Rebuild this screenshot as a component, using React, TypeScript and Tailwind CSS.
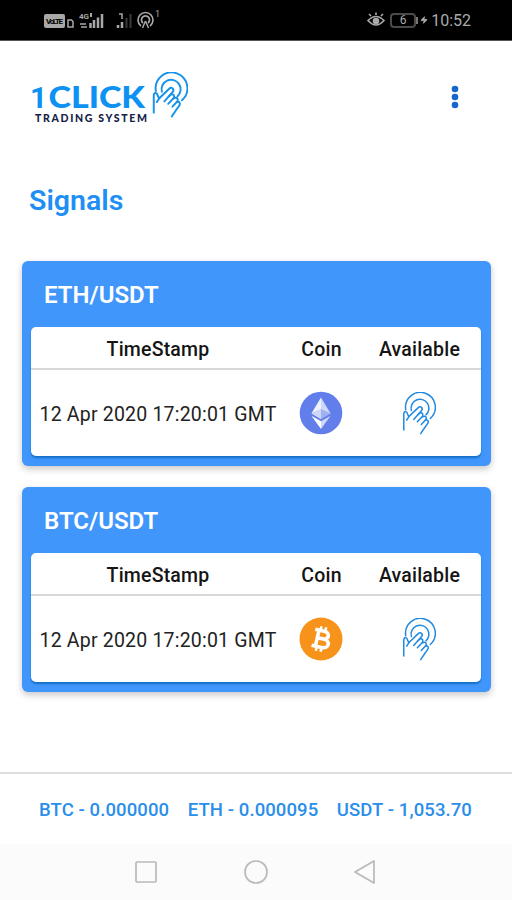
import { Zap } from "lucide-react";

type CoinName = "ETH" | "BTC";

const signals: { pair: string; coin: CoinName; time: string }[] = [
  { pair: "ETH/USDT", coin: "ETH", time: "12 Apr 2020 17:20:01 GMT" },
  { pair: "BTC/USDT", coin: "BTC", time: "12 Apr 2020 17:20:01 GMT" },
];

function TouchIcon({ className, strokeWidth = 4.5 }: { className?: string; strokeWidth?: number }) {
  return (
    <svg
      viewBox="42 32 102 130"
      className={className}
      fill="none"
      stroke="currentColor"
      strokeWidth={strokeWidth}
      strokeLinecap="round"
      strokeLinejoin="round"
    >
      <path d="M53 86A45 45 0 1 1 127 112" />
      <path d="M70 88A27 27 0 1 1 114 101" />
      <path d="M47 147V98q1-10 9-5l6 14 28-27q6-6 11-1 4 5-1 10L77 115" />
      <path d="M90 101l5-5q6-3 9 2 2 4-1 8L88 122" />
      <path d="M103 107q7-4 11 0 3 5-1 9l-13 14" />
      <path d="M113 117q6-2 8 3 1 4-3 9l-8 11-12 18" />
      <path d="M62 107l-6 10" />
    </svg>
  );
}

function Logo() {
  return (
    <div className="flex items-start">
      <svg width="121" height="54" className="block">
        <g fontFamily="Lato, sans-serif">
          <text x="-1" y="37" fontSize="30" fontFamily="Roboto, sans-serif" fontWeight="700" fill="#0d91f2">1</text>
          <text x="17.500" y="37" fontSize="30" fontWeight="900" fill="#0d91f2" textLength="96.500" lengthAdjust="spacingAndGlyphs">CLICK</text>
          <text x="4" y="50.500" fontSize="10.500" fontWeight="900" fill="#142347" textLength="112">TRADING SYSTEM</text>
        </g>
      </svg>
      <TouchIcon className="mt-px h-[46px] w-[36px] text-[#1593ea]" strokeWidth={5.5} />
    </div>
  );
}

function EthIcon() {
  return (
    <svg width="44" height="44" viewBox="0 0 44 44">
      <circle cx="22" cy="22" r="21.3" fill="#627eea" />
      <path d="M22 6.5L12.4 22.6 22 18.3z" fill="#fff" fillOpacity=".9" />
      <path d="M22 6.5l9.6 16.1L22 18.3z" fill="#fff" fillOpacity=".7" />
      <path d="M12.4 22.6L22 18.3v10z" fill="#fff" fillOpacity=".7" />
      <path d="M31.6 22.6L22 18.3v10z" fill="#fff" fillOpacity=".4" />
      <path d="M12.4 24.7L22 30.2v7.8z" fill="#fff" />
      <path d="M31.6 24.7L22 30.2v7.8z" fill="#fff" fillOpacity=".7" />
    </svg>
  );
}

function BtcIcon() {
  return (
    <svg width="44" height="44" viewBox="0 0 44 44">
      <circle cx="22" cy="22" r="21.5" fill="#f7931a" />
      <g transform="translate(22 22) rotate(13) scale(.97)" fill="none" stroke="#fff">
        <path d="M-8-8.5h9.500c7 0 7 8 0 8h-5.500h6.500c8 0 8 9 0 9H-8M-4-8.500v17" strokeWidth="3.700" />
        <path d="M-2.500-13v5M2.500-13v5M-2.500 8v5M2.500 8v5" strokeWidth="2.600" />
      </g>
    </svg>
  );
}

function StatusBar() {
  return (
    <div className="flex h-[41px] items-center border-b border-[#555] bg-black pr-[41px] pl-[43px] text-[#aaa]">
      <svg width="120" height="40" fill="none" stroke="#a8a8a8">
        <rect x="1" y="14" width="21" height="14" rx="2" fill="#a8a8a8" stroke="none" />
        <text x="3" y="24" fontSize="8" fontWeight="700" fontFamily="Roboto, sans-serif" fill="#000" stroke="none" textLength="17">VoLTE</text>
        <path d="M25 20h3.500l1.500 1.500v5.500h-5z" strokeWidth="1.500" />
        <text x="36" y="19" fontSize="8" fontWeight="700" fontFamily="Roboto, sans-serif" fill="#a8a8a8" stroke="none">4G</text>
        <path d="M37 24h6m-5 3h6" strokeWidth="1.500" />
        <path d="M47.500 28v-5M51 28v-8M55 28V17.500M59 28V14" strokeWidth="2.500" />
        <path d="M48 13v4" strokeWidth="2" />
        <path d="M75 28v-3M79 28v-6" strokeWidth="2.500" />
        <path d="M83.500 28v-10M87.500 28V14" stroke="#3a3a3a" strokeWidth="2" />
        <path d="M76 14h3v5" strokeWidth="1.500" />
        <path d="M98 26a7.500 7.500 0 1 1 9 0M100 23a4 4 0 1 1 5 0" strokeWidth="1.700" />
        <path d="M102.500 21l-3 7M102.500 21l3 7" strokeWidth="1.500" />
        <text x="112" y="17" fontSize="9" fontFamily="Roboto, sans-serif" fill="#a8a8a8" stroke="none">1</text>
      </svg>
      <div className="ml-auto flex items-center">
        <svg width="18" height="18" viewBox="0 0 18 18" fill="none" stroke="#aaa" strokeWidth="1.600">
          <path d="M1 9.500q8-8 16 0-8 9-16 0zM4 5L2 3M9 4V1.500M14 5l2-2" />
          <circle cx="9" cy="10" r="2.500" fill="#aaa" />
        </svg>
        <div className="ml-[5px] flex h-[15px] w-[26px] items-center justify-center rounded-[4px] border-2 border-[#4a4a4a] font-[Roboto,sans-serif] text-[12px] leading-none">
          6
        </div>
        <div className="h-[7px] w-[2px] bg-[#777]" />
        <Zap className="ml-[2px] h-[12px] w-[8px]" fill="currentColor" />
        <span className="ml-[3px] pt-[2px] font-[Roboto,sans-serif] text-[16px] leading-none">10:52</span>
      </div>
    </div>
  );
}

function SignalCard({ pair, coin, time }: { pair: string; coin: CoinName; time: string }) {
  return (
    <section className="h-[205px] rounded-[6px] bg-[#4096fb] px-[9px] shadow-[0_3px_7px_rgba(0,0,0,0.22)]">
      <h2 className="flex h-[66px] items-center pt-[2px] pl-[13px] text-[24px] font-semibold text-white">{pair}</h2>
      <div className="mr-px h-[129px] rounded-[5px] bg-white text-[#151515] shadow-[0_2px_2px_#1670c8]">
        <div className="grid h-[43px] grid-cols-[254px_73px_123px] items-center border-b-2 border-[#d8d8d8] pt-[5px] text-center text-[19.5px] font-medium tracking-[0.2px]">
          <span>TimeStamp</span>
          <span>Coin</span>
          <span>Available</span>
        </div>
        <div className="grid h-[86px] grid-cols-[254px_72px_124px] items-center justify-items-center">
          <span className="pt-[3px] text-[19.5px] tracking-[0.2px] whitespace-nowrap text-[#222]">{time}</span>
          {coin === "ETH" ? <EthIcon /> : <BtcIcon />}
          <TouchIcon className="h-[43px] w-[34px] text-[#2089df]" />
        </div>
      </div>
    </section>
  );
}

export default function App() {
  return (
    <div className="flex h-[900px] w-[512px] flex-col overflow-hidden bg-white font-[Roboto,sans-serif]">
      <StatusBar />

      <header className="flex h-[130px] items-start justify-between pt-[30px] pr-[53px] pl-[31px]">
        <Logo />
        <svg width="8" height="24" className="mt-[14px]" fill="#1468cc">
          <circle cx="4" cy="4" r="3.300" />
          <circle cx="4" cy="12" r="3.300" />
          <circle cx="4" cy="20" r="3.300" />
        </svg>
      </header>

      <main className="flex-1 pr-[21px] pl-[22px]">
        <h1 className="flex h-[58px] items-center pt-[3px] pl-[7px] text-[28.5px] font-semibold text-[#1e8ff5]">Signals</h1>
        <div className="mt-[32px] flex flex-col gap-[21px]">
          {signals.map((signal) => (
            <SignalCard key={signal.pair} {...signal} />
          ))}
        </div>
      </main>

      <footer>
        <div className="flex h-[72px] items-center gap-[18.5px] border-t-2 border-[#dedede] pt-[3px] pl-[39px] text-[18.5px] font-medium tracking-[0.1px] whitespace-nowrap text-[#2a8eea]">
          <span>BTC - 0.000000</span>
          <span>ETH - 0.000095</span>
          <span>USDT - 1,053.70</span>
        </div>
        <nav className="flex h-[56px] items-center bg-[#fbfbfb] pl-[134px]">
          <svg width="244" height="26" fill="none" stroke="#b9b9b9" strokeWidth="1.700">
            <rect x="2" y="3" width="20" height="20" rx="1" />
            <circle cx="122" cy="13" r="11" />
            <path d="M240 2v22L221 13z" strokeLinejoin="round" />
          </svg>
        </nav>
      </footer>
    </div>
  );
}
